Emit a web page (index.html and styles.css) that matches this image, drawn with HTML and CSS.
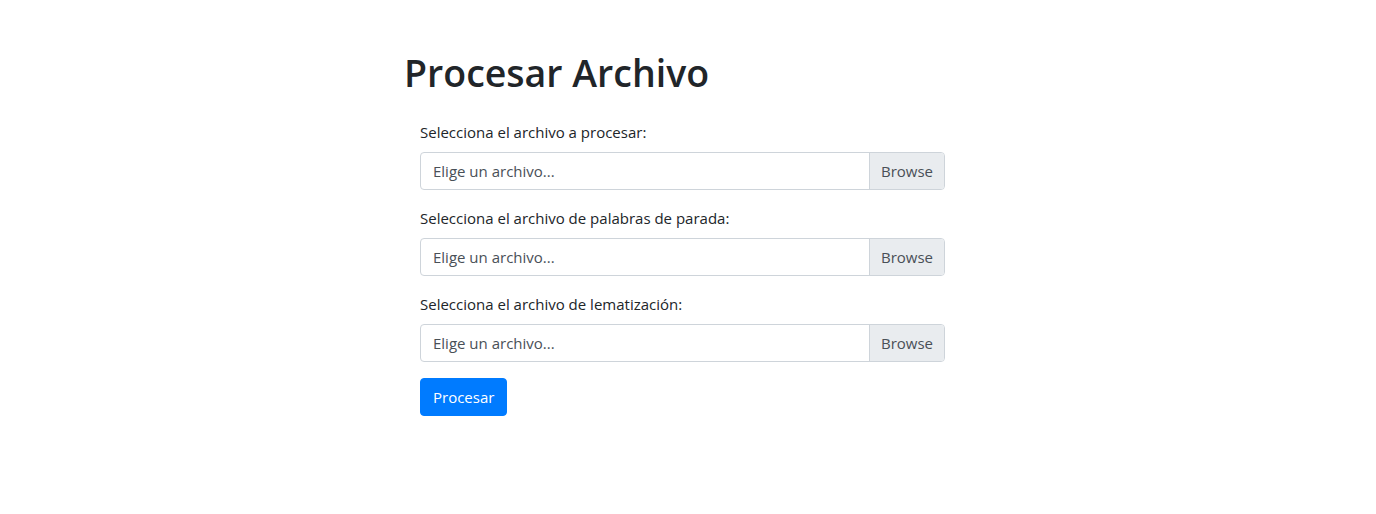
FILE: index.html
```html
<!DOCTYPE html>
<html lang="es">
<head>
<meta charset="utf-8">
<title>Procesar Archivo</title>
<link rel="stylesheet" href="styles.css">
</head>
<body>
<main class="page">
  <h1 class="title">Procesar Archivo</h1>
  <form class="form">
    <div class="group">
      <label class="label">Selecciona el archivo a procesar:</label>
      <div class="file">
        <span class="file-text">Elige un archivo...</span>
        <span class="file-btn">Browse</span>
      </div>
    </div>
    <div class="group">
      <label class="label">Selecciona el archivo de palabras de parada:</label>
      <div class="file">
        <span class="file-text">Elige un archivo...</span>
        <span class="file-btn">Browse</span>
      </div>
    </div>
    <div class="group">
      <label class="label">Selecciona el archivo de lematización:</label>
      <div class="file">
        <span class="file-text">Elige un archivo...</span>
        <span class="file-btn">Browse</span>
      </div>
    </div>
    <button type="button" class="btn">Procesar</button>
  </form>
</main>
</body>
</html>
```

FILE: styles.css
```css
* { box-sizing: border-box; }
html, body { margin: 0; padding: 0; }
body {
  font-family: "Open Sans", "Noto Sans", sans-serif;
  font-size: 15px;
  line-height: 1.5;
  color: #212529;
  background: #fff;
}
.page {
  margin-left: 404px;
  padding-top: 49px;
  width: 560px;
}
.title {
  margin: 0 0 23px 0;
  font-size: 37.5px;
  font-weight: 600;
  line-height: 48px;
}
.form {
  padding-left: 16px;
  width: 541px;
}
.group { margin-bottom: 16px; }
.label {
  display: block;
  margin-bottom: 8px;
  font-size: 15px;
  line-height: 24px;
}
.file {
  display: flex;
  height: 38px;
  border: 1px solid #ced4da;
  border-radius: 4px;
  overflow: hidden;
  color: #495057;
}
.file-text {
  flex: 1;
  padding: 6px 12px;
  line-height: 24px;
}
.file-btn {
  padding: 6px 11px;
  line-height: 24px;
  background: #e9ecef;
  border-left: 1px solid #ced4da;
}
.btn {
  display: block;
  height: 38px;
  padding: 6px 12px;
  font-family: inherit;
  font-size: 15px;
  line-height: 24px;
  color: #fff;
  background: #007bff;
  border: 1px solid #007bff;
  border-radius: 4px;
}
```
